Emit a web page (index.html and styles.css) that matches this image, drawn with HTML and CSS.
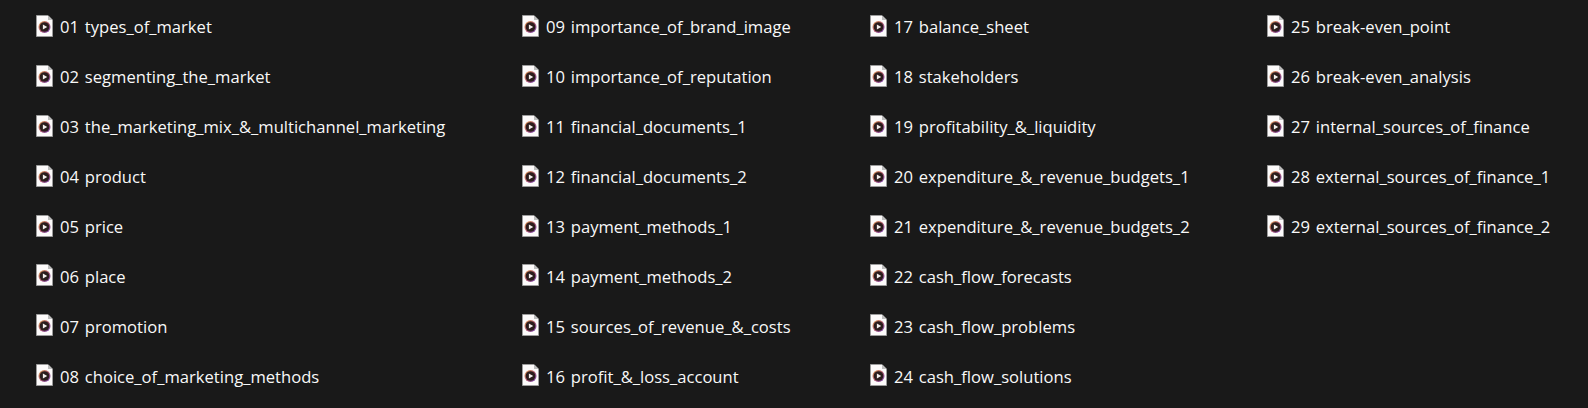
FILE: index.html
```html
<!DOCTYPE html>
<html lang="en">
<head>
<meta charset="utf-8">
<title>Files</title>
<link rel="stylesheet" href="styles.css">
</head>
<body>
<svg class="defs" width="0" height="0" aria-hidden="true">
  <defs>
    <linearGradient id="ring" x1="0" y1="0" x2="1" y2="1">
      <stop offset="0%" stop-color="#e0a050"/>
      <stop offset="50%" stop-color="#b05a70"/>
      <stop offset="100%" stop-color="#6a3fb0"/>
    </linearGradient>
    <symbol id="file" viewBox="0 0 17 22">
      <path d="M.5.5H12L16.500 5V21.500H.5Z" fill="#fdfbfb" stroke="#9c9c9c"/>
      <path d="M12 1V5H16Z" fill="#bdbdbd"/>
      <circle cx="8.500" cy="12" r="6" fill="url(#ring)"/>
      <circle cx="8.500" cy="12" r="4.800" fill="#2b1c1c"/>
      <path d="M6.900 9.400L11.200 12L6.900 14.600Z" fill="#f4f0ee"/>
    </symbol>
  </defs>
</svg>
<main class="grid">
  <div class="col c1">
    <div class="item"><svg class="ic"><use href="#file"/></svg><span>01 types_of_market</span></div>
    <div class="item"><svg class="ic"><use href="#file"/></svg><span>02 segmenting_the_market</span></div>
    <div class="item"><svg class="ic"><use href="#file"/></svg><span>03 the_marketing_mix_&amp;_multichannel_marketing</span></div>
    <div class="item"><svg class="ic"><use href="#file"/></svg><span>04 product</span></div>
    <div class="item"><svg class="ic"><use href="#file"/></svg><span>05 price</span></div>
    <div class="item"><svg class="ic"><use href="#file"/></svg><span>06 place</span></div>
    <div class="item"><svg class="ic"><use href="#file"/></svg><span>07 promotion</span></div>
    <div class="item"><svg class="ic"><use href="#file"/></svg><span>08 choice_of_marketing_methods</span></div>
  </div>
  <div class="col c2">
    <div class="item"><svg class="ic"><use href="#file"/></svg><span>09 importance_of_brand_image</span></div>
    <div class="item"><svg class="ic"><use href="#file"/></svg><span>10 importance_of_reputation</span></div>
    <div class="item"><svg class="ic"><use href="#file"/></svg><span>11 financial_documents_1</span></div>
    <div class="item"><svg class="ic"><use href="#file"/></svg><span>12 financial_documents_2</span></div>
    <div class="item"><svg class="ic"><use href="#file"/></svg><span>13 payment_methods_1</span></div>
    <div class="item"><svg class="ic"><use href="#file"/></svg><span>14 payment_methods_2</span></div>
    <div class="item"><svg class="ic"><use href="#file"/></svg><span>15 sources_of_revenue_&amp;_costs</span></div>
    <div class="item"><svg class="ic"><use href="#file"/></svg><span>16 profit_&amp;_loss_account</span></div>
  </div>
  <div class="col c3">
    <div class="item"><svg class="ic"><use href="#file"/></svg><span>17 balance_sheet</span></div>
    <div class="item"><svg class="ic"><use href="#file"/></svg><span>18 stakeholders</span></div>
    <div class="item"><svg class="ic"><use href="#file"/></svg><span>19 profitability_&amp;_liquidity</span></div>
    <div class="item"><svg class="ic"><use href="#file"/></svg><span>20 expenditure_&amp;_revenue_budgets_1</span></div>
    <div class="item"><svg class="ic"><use href="#file"/></svg><span>21 expenditure_&amp;_revenue_budgets_2</span></div>
    <div class="item"><svg class="ic"><use href="#file"/></svg><span>22 cash_flow_forecasts</span></div>
    <div class="item"><svg class="ic"><use href="#file"/></svg><span>23 cash_flow_problems</span></div>
    <div class="item"><svg class="ic"><use href="#file"/></svg><span>24 cash_flow_solutions</span></div>
  </div>
  <div class="col c4">
    <div class="item"><svg class="ic"><use href="#file"/></svg><span>25 break-even_point</span></div>
    <div class="item"><svg class="ic"><use href="#file"/></svg><span>26 break-even_analysis</span></div>
    <div class="item"><svg class="ic"><use href="#file"/></svg><span>27 internal_sources_of_finance</span></div>
    <div class="item"><svg class="ic"><use href="#file"/></svg><span>28 external_sources_of_finance_1</span></div>
    <div class="item"><svg class="ic"><use href="#file"/></svg><span>29 external_sources_of_finance_2</span></div>
  </div>
</main>
</body>
</html>
```
FILE: styles.css
```css
html, body {
  margin: 0;
  height: 408px;
  overflow: hidden;
  background: #191919;
}
.defs {
  display: block;
  height: 0;
}
.grid {
  display: grid;
  grid-template-columns: 486px 348px 397px 1fr;
  padding: 1px 0 0 36px;
  font-family: "Open Sans", "Noto Sans", sans-serif;
  font-size: 16.6px;
  word-spacing: 1.5px;
  color: #f8f8f8;
}
.col {
  display: flex;
  flex-direction: column;
}
.item {
  display: flex;
  align-items: center;
  gap: 7px;
  height: 49.9px;
  white-space: nowrap;
}
.item span {
  padding-top: 2px;
}
.ic {
  width: 17px;
  height: 22px;
  flex: none;
}
```
